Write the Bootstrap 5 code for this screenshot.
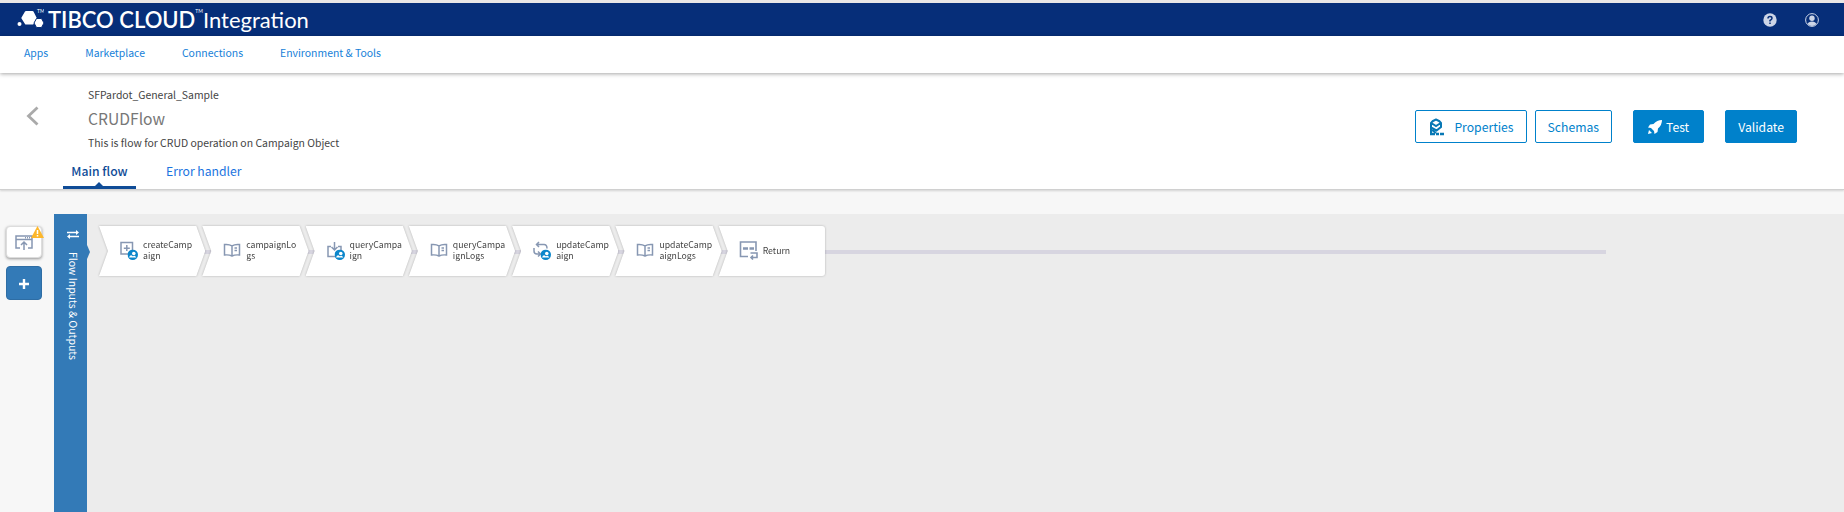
<!DOCTYPE html>
<html lang="en">
<head>
<meta charset="utf-8">
<meta name="viewport" content="width=device-width, initial-scale=1">
<title>TIBCO Cloud Integration</title>
<link href="https://cdn.jsdelivr.net/npm/bootstrap@5.3.0/dist/css/bootstrap.min.css" rel="stylesheet">
<style>
body{font-family:"Noto Sans CJK SC",sans-serif;font-size-adjust:.473;font-size:12px;line-height:16px;color:#444;background:#f7f7f7}
a{text-decoration:none}
button{font-size-adjust:inherit}
.topbar{background:#062e79;height:36px;border-top:3px solid #e9e7e7;color:#fff}
.brand-name{font:400 22px/24px Lato,sans-serif;font-size-adjust:none;color:#fff}
.brand-name b{font-weight:600}
.brand-name sup{font-size:5px;top:-15px}
.tools{gap:28px;padding-right:25px}
.mainnav{height:37px;background:#fff;box-shadow:0 1px 4px rgba(0,0,0,.35);position:relative;z-index:1;gap:37px;padding:0 24px 3px}
.mainnav a{color:#1580d8}
.flowhead{background:#fff;height:117px;border-bottom:1px solid #d0d0d0;box-shadow:0 1px 2px rgba(0,0,0,.15)}
.backcol{width:88px;padding:33px 0 0 26px}
.back{line-height:0}
.flowname{font-size:18px;line-height:24px;color:#777}
.flowtext{padding-top:14px}
.tabs{margin-left:63px}
.tabs a{font-size:14px;line-height:18px;color:#1a73e0;padding:0 30px;height:27px}
.tabs a.active{color:#0f4c97;font-weight:500;padding:0;text-align:center;border-bottom:3px solid #0f4c97;position:relative;width:73px;white-space:nowrap}
.tabs a.active::after{content:"";position:absolute;left:32px;bottom:0;border:4px solid transparent;border-top:0;border-bottom-color:#0f4c97}
.actions{padding:37px 47px 0 0}
.act{font-size:14px;line-height:20px;height:33px;border-radius:2px;padding:0 12px;--bs-btn-border-color:#0081cb;--bs-btn-color:#0081cb;white-space:nowrap}
.act.solid{background:#0081cb;color:#fff}
.act-gap{margin-left:21px}
.act.run{padding:0 14px}
.rail{width:54px;padding:12px 12px 0 6px}
.tile{height:32px;width:36px;border-radius:4px;background:#fff;border:1px solid #ddd;box-shadow:0 1px 3px rgba(0,0,0,.4)}
.tile.add{background:#337ab7;border-color:#2e6da4;box-shadow:none;height:34px}
.warn{position:absolute;right:-3px;top:-1px}
.io{width:33px;background:#337ab7;color:#fff;border:0;padding:16px 0 0;position:relative}
.io::after{content:"";position:absolute;left:33px;top:31px;border:7px solid transparent;border-left:3px solid #337ab7;border-right:0}
.io span{writing-mode:vertical-rl;font-size:12px;line-height:16px;margin-top:13px}
.stage{background:#ececec;padding:12px 238px 0 12px;min-width:0}
.track{position:relative}
.track::before{content:"";position:absolute;left:20px;right:0;top:24px;height:4px;background:#d7d5e0}
.steps{width:726px;margin:0;padding:0;list-style:none;position:relative}
.steps li{flex:1 1 0;min-width:0;filter:drop-shadow(0 0 1px rgba(0,0,0,.25))}
.steps li+li{margin-left:-3px}
.step{height:50px;width:100%;border:0;background:#fff;color:#444;padding:0 0 2px 20px;gap:4px;font-size:10px;line-height:11px;clip-path:polygon(0 0,calc(100% - 9px) 0,100% 50%,calc(100% - 9px) 100%,0 100%,9px 50%)}
.step span{width:53px;word-break:break-all;text-align:left}
.step svg{flex:none}
.steps li:last-child .step{clip-path:polygon(0 0,100% 0,100% 100%,0 100%,9px 50%);border-radius:0 3px 3px 0}
</style>
</head>
<body class="d-flex flex-column min-vh-100">
<svg class="d-none" aria-hidden="true">
<symbol id="sf" viewBox="0 0 10 10"><circle cx="5" cy="5" r="5" fill="#0a86cb"/><path d="M1.500 7.500Q2 5.500 3.600 5.500L5 6.500l2-.5L8.500 7.500z" fill="#fff"/><circle cx="6" cy="3.800" r="1.700" fill="#fff"/></symbol>
<symbol id="book" viewBox="0 0 20 20"><path d="M2.500 4.500Q7 4 10 5.800Q13 4 17.500 4.500V15Q13 14.500 10 16Q7 14.500 2.500 15zM10 5.800V16M12.500 8H15M12.500 10.500H15" fill="none" stroke="#8797b2" stroke-width="1.500"/></symbol>
</svg>
<header class="topbar d-flex align-items-center flex-shrink-0">
<a href="#" class="d-flex align-items-center brand-name ms-3">
<svg width="28" height="22" viewBox="0 0 28 22" fill="#fff"><path d="M9 2.500q.3-.5 1-.5h6.500q.7 0 1 .5l3 6q.3.500 0 1l-3 5.500q-.3.600-1 .600H10q-.7 0-1-.600L5.500 9.500q-.3-.5 0-1z"/><path d="M20.500 9.500h5l2.500 4.500-2.500 4.500h-5L18 14z" stroke="#062e79"/><circle cx="3.500" cy="15" r="2"/><text x="21" y="4" font-size="5" font-family="Lato">TM</text></svg>
<span class="ms-1"><b>TIBCO CLOUD</b><sup>TM</sup>Integration</span></a>
<div class="tools ms-auto d-flex">
<a href="#" aria-label="Help" class="d-flex"><svg width="14" height="14" viewBox="0 0 14 14"><circle cx="7" cy="7" r="6.700" fill="#ccd5e7"/><path d="M5 5.500q0-2 2-2t2 1.700Q9 6.500 7 7.500v1M7 9.500v1.500" fill="none" stroke="#062e79" stroke-width="1.500"/></svg></a>
<a href="#" aria-label="Account" class="d-flex"><svg width="14" height="14" viewBox="0 0 14 14"><circle cx="7" cy="7" r="6.400" fill="none" stroke="#ccd5e7"/><circle cx="7" cy="5.200" r="2.700" fill="#ccd5e7"/><path d="M2.500 11q1-2.500 4.500-2.500t4.500 2.500Q9.500 13 7 13t-4.500-2" fill="#ccd5e7"/></svg></a>
</div>
</header>
<nav class="mainnav d-flex align-items-center flex-shrink-0"><a href="#">Apps</a><a href="#">Marketplace</a><a href="#">Connections</a><a href="#">Environment &amp; Tools</a></nav>
<section class="flowhead d-flex flex-column justify-content-between flex-shrink-0">
<div class="d-flex">
<div class="backcol"><a href="#" class="back d-block" aria-label="Back"><svg width="13" height="20" viewBox="0 0 13 20"><path d="M11.500 1.500 2.500 10l9 8.500" fill="none" stroke="#aaa" stroke-width="2.800"/></svg></a></div>
<div class="flowtext"><div>SFPardot_General_Sample</div><h1 class="flowname fw-normal my-1">CRUDFlow</h1><div>This is flow for CRUD operation on Campaign Object</div></div>
<div class="actions ms-auto d-flex align-items-start">
<button class="btn act d-flex align-items-center me-2" type="button"><svg class="me-2" width="18" height="18" viewBox="0 0 18 18" fill="none" stroke="#0878b5" stroke-width="2"><path d="M8 1.500Q12 3 13 5v4L8.500 12.500 3 9.500V5Q4 3 8 1.500zM4 5.500 8 8l4-2.500M3 10v6M4 12l4 3"/><path d="M2 16h5M8 16h3M12 16h4" stroke-width="2.600"/></svg>Properties</button>
<button class="btn act" type="button">Schemas</button>
<button class="btn act solid run act-gap d-flex align-items-center" type="button"><svg class="me-1" width="14" height="14" viewBox="0 0 14 14" fill="#fff"><path d="M14 0Q14 5 10 8.500l-.5 3.500L6.500 14l-.5-3-3-3-3-.500 2-3 3.500-.500Q9 0 14 0zM1 10l3 3-4 1z"/></svg>Test</button>
<button class="btn act solid act-gap" type="button">Validate</button>
</div></div>
<div class="tabs d-flex"><a href="#" class="active">Main flow</a><a href="#">Error handler</a></div>
</section>
<main class="d-flex flex-grow-1 mt-4">
<aside class="rail d-flex flex-column flex-shrink-0">
<button class="tile position-relative p-0 mb-2" type="button" aria-label="Trigger"><svg width="18" height="16" viewBox="0 0 18 16" fill="none" stroke="#8797b2" stroke-width="1.500"><path d="M5 13H1V1h16v12h-4M1 4.500h16M9 15V7.500M6 10l3-3 3 3"/><path d="M10 2.700h5" stroke-dasharray="1 1"/></svg>
<svg class="warn" width="13" height="12" viewBox="0 0 13 12"><path d="M6.500 0 13 12H0z" fill="#fdb72b"/><path d="M6.500 4v4M6.500 9v1.500" stroke="#fff" stroke-width="1.500"/></svg></button>
<button class="tile add p-0" type="button" aria-label="Add"><svg width="10" height="10" viewBox="0 0 10 10"><path d="M5 0v10M0 5h10" stroke="#fff" stroke-width="2.400"/></svg></button>
</aside>
<button class="io d-flex flex-column align-items-center flex-shrink-0" type="button"><svg class="flex-shrink-0 ms-1" width="12" height="9" viewBox="0 0 12 9"><path d="M0 2.500h10M2 6.500h10" stroke="#fff" stroke-width="1.600"/><path d="M9 0v5l3-2.500zM3 4v5L0 6.500z" fill="#fff"/></svg><span class="ms-1">Flow Inputs &amp; Outputs</span></button>
<div class="stage flex-grow-1"><div class="track"><ol class="steps d-flex">
<li><button class="step d-flex align-items-center" type="button"><svg width="20" height="20" viewBox="0 0 20 20"><path d="M2 2.500h11.500V14H2zM7.800 5v6M4.800 8.200h6" fill="none" stroke="#8797b2" stroke-width="1.500"/><use href="#sf" x="8.500" y="9.500" width="10.500" height="10.500"/></svg><span>createCamp<wbr>aign</span></button></li>
<li><button class="step d-flex align-items-center" type="button"><svg width="20" height="20"><use href="#book"/></svg><span>campaignLogs</span></button></li>
<li><button class="step d-flex align-items-center" type="button"><svg width="20" height="20" viewBox="0 0 20 20"><path d="M5 6.500H2v10h13v-10h-3M8.500 2v8M5.500 7l3 3 3-3" fill="none" stroke="#8797b2" stroke-width="1.500"/><use href="#sf" x="8.500" y="9.500" width="10.500" height="10.500"/></svg><span>queryCampaign</span></button></li>
<li><button class="step d-flex align-items-center" type="button"><svg width="20" height="20"><use href="#book"/></svg><span>queryCampaignLogs</span></button></li>
<li><button class="step d-flex align-items-center" type="button"><svg width="20" height="20" viewBox="0 0 20 20"><path d="M7 2 4.500 4.500 7 7M5 4.500h7q3 0 3 4M2 8v3q0 3 3 3h3M6 11.500 8.500 14 6 16.500" fill="none" stroke="#8797b2" stroke-width="1.500"/><use href="#sf" x="8.500" y="9.500" width="10.500" height="10.500"/></svg><span>updateCampaign</span></button></li>
<li><button class="step d-flex align-items-center" type="button"><svg width="20" height="20"><use href="#book"/></svg><span>updateCampaignLogs</span></button></li>
<li><button class="step d-flex align-items-center" type="button"><svg width="20" height="20" viewBox="0 0 20 20" fill="none" stroke="#8797b2" stroke-width="1.600"><path d="M9 16.500H1.500V2H17v9M11.500 13H18v4.500h-6M14 15.500l-2 2 2 2"/><path d="M4 8.500h5M10.500 8.500H15" stroke-width="2.500"/></svg><span>Return</span></button></li>
</ol></div></div>
</main>
<script src="https://cdn.jsdelivr.net/npm/bootstrap@5.3.0/dist/js/bootstrap.bundle.min.js"></script>
</body>
</html>
